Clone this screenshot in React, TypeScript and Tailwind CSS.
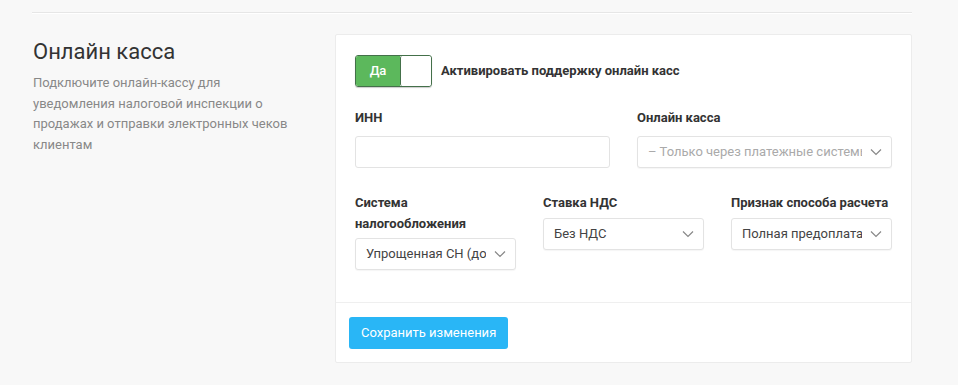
import React from "react";

function Chevron() {
  return (
    <svg width="12" height="8" viewBox="0 0 12 8" fill="none" className="shrink-0">
      <path d="M1 1.5L6 6.5L11 1.5" stroke="#888" strokeWidth="1.2" />
    </svg>
  );
}

function Select({ value, placeholder }: { value: string; placeholder?: boolean }) {
  return (
    <div className="h-[32px] w-full border border-[#e3e3e3] rounded-[3px] bg-white flex items-center pl-[10px] pr-[9px] gap-[8px] shadow-[0_1px_1px_rgba(0,0,0,0.04)]">
      <span
        className={
          "flex-1 overflow-hidden whitespace-nowrap text-[13px] " +
          (placeholder ? "text-[#aaa]" : "text-[#444]")
        }
      >
        {value}
      </span>
      <Chevron />
    </div>
  );
}

export default function App() {
  return (
    <div
      className="h-[385px] w-[958px] bg-[#f8f8f8] overflow-hidden"
      style={{ fontFamily: "Roboto, 'Noto Sans', sans-serif" }}
    >
      <div className="pt-[12px] pl-[32px] pr-[46px]">
        <div className="h-[2px] border-t border-[#e6e6e6] bg-white" />
        <div className="flex mt-[20px]">
          <div className="w-[303px] pl-[1px] pt-[4px]">
            <h2 className="text-[22px] leading-[28px] text-[#333] font-normal">Онлайн касса</h2>
            <p className="mt-[7px] text-[13px] leading-[20.5px] text-[#888] w-[285px]">
              Подключите онлайн-кассу для
              <br />
              уведомления налоговой инспекции о
              <br />
              продажах и отправки электронных чеков
              <br />
              клиентам
            </p>
          </div>
          <div className="flex-1 bg-white border border-[#ececec] rounded-[2px]">
            <div className="px-[19px] pt-[20px] pb-[32px]">
              <div className="flex items-center gap-[9px]">
                <div className="flex h-[32px] w-[77px] border border-[#44704a] rounded-[3px] overflow-hidden shadow-[0_1px_1px_rgba(0,0,0,0.2)]">
                  <div className="w-[44px] bg-[#5cb85c] text-white text-[13px] font-medium flex items-center justify-center">
                    Да
                  </div>
                  <div className="flex-1 bg-white border-l border-[#44704a] rounded-[2px]" />
                </div>
                <span className="text-[13px] font-bold text-[#333]">Активировать поддержку онлайн касс</span>
              </div>

              <div className="grid grid-cols-2 gap-x-[27px] mt-[21px]">
                <div>
                  <div className="text-[13px] font-bold text-[#333] leading-[20px]">ИНН</div>
                  <div className="mt-[8px] h-[32px] border border-[#e3e3e3] rounded-[3px] bg-white" />
                </div>
                <div>
                  <div className="text-[13px] font-bold text-[#333] leading-[20px]">Онлайн касса</div>
                  <div className="mt-[8px]">
                    <Select value="– Только через платежные системы" placeholder />
                  </div>
                </div>
              </div>

              <div className="grid grid-cols-3 gap-x-[27px] mt-[24px]">
                <div>
                  <div className="text-[13px] font-bold text-[#333] leading-[21px] w-[130px]">Система налогообложения</div>
                  <div className="mt-[4px]">
                    <Select value="Упрощенная СН (доходы)" />
                  </div>
                </div>
                <div>
                  <div className="text-[13px] font-bold text-[#333] leading-[21px]">Ставка НДС</div>
                  <div className="mt-[5px]">
                    <Select value="Без НДС" />
                  </div>
                </div>
                <div>
                  <div className="text-[13px] font-bold text-[#333] leading-[21px]">Признак способа расчета</div>
                  <div className="mt-[5px]">
                    <Select value="Полная предоплата" />
                  </div>
                </div>
              </div>
            </div>
            <div className="border-t border-[#efefef] px-[13px] pt-[14px] pb-[13px]">
              <button className="h-[32px] px-[12px] bg-[#29b6f6] text-white text-[13px] rounded-[3px]">
                Сохранить изменения
              </button>
            </div>
          </div>
        </div>
      </div>
    </div>
  );
}
